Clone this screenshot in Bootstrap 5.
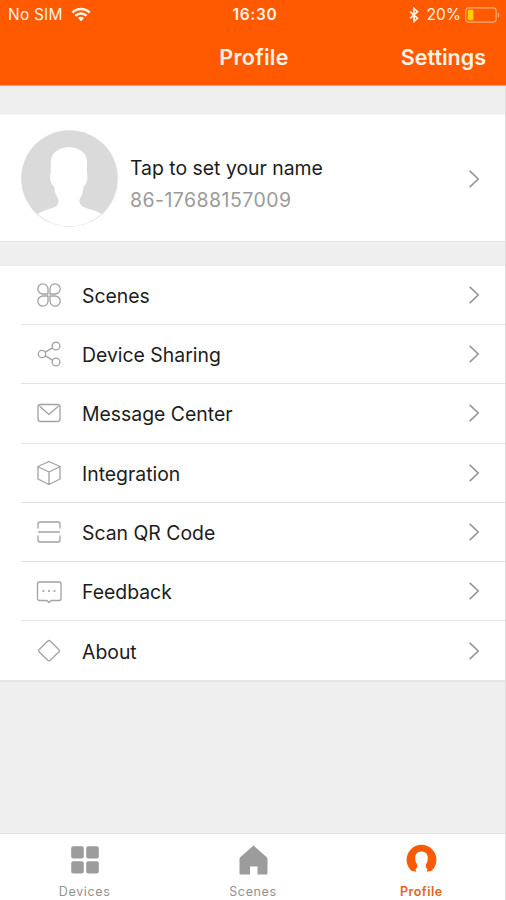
<!DOCTYPE html>
<html lang="en">
<head>
<meta charset="utf-8">
<meta name="viewport" content="width=device-width, initial-scale=1">
<title>Profile</title>
<link rel="stylesheet" href="https://cdn.jsdelivr.net/npm/bootstrap@5.3.0/dist/css/bootstrap.min.css">
<style>
  body { font-family: Inter, "Liberation Sans", sans-serif; background: #efefef; color: #1c1c1c; }
  .screen { height: 900px; border-right: 1px solid #dedede; }
  .top { height: 86px; background: #ff5a00; color: #fff3e6; margin-right: -1px; border-bottom: 1px solid #ff9a66; }
  .status { height: 29px; font-size: 15.5px; line-height: 30px; padding: 0 6px 0 8px; }
  .status > div, .titlebar > div { flex: 1 1 0; }
  .sim { letter-spacing: .2px; }
  .clock { font-weight: 600; letter-spacing: .7px; padding-left: 2px; }
  .titlebar { height: 56px; font-size: 21.5px; font-weight: 600; line-height: 57px; padding: 0 20px; }
  .titlebar .heading { letter-spacing: .3px; padding-left: 2px; }
  .who { height: 128px; margin-top: 28px; padding: 0 25px 0 21px; border-top: 1px solid #f4f4f4; border-bottom: 1px solid #e4e4e4; }
  .who .lines { padding-top: 12px; padding-left: 12px; }
  .who .name { font-size: 19.4px; line-height: 32px; }
  .who .phone { font-size: 19.5px; line-height: 32px; letter-spacing: .45px; color: #9b9b9b; }
  .who .chev { margin-top: 2px; }
  .menu { margin-top: 24px; padding-left: 21px; border-bottom: 2px solid #e6e6e6; }
  .menu a { height: 59.3px; padding: 0 25px 0 14px; color: #1c1c1c; font-size: 19.4px; border-top: 1px solid #e3e3e3; }
  .menu a:first-child { height: 58px; border-top: 0; }
  .menu .label { margin-left: 19px; padding-top: 3px; }
  .line { fill: none; stroke: #a2a2a2; stroke-width: 1.3; stroke-linejoin: round; stroke-linecap: round; }
  .chev { fill: none; stroke: #969696; stroke-width: 1.6; }
  .tabs { height: 67px; border-top: 1px solid #e2e2e2; }
  .tabs a { flex: 1 1 0; color: #929292; font-size: 12.5px; letter-spacing: .65px; line-height: 16px; padding-top: 10px; padding-left: 1px; }
  .tabs svg { margin-bottom: 8px; }
  .tabs a.on { color: #e8631c; font-weight: 600; letter-spacing: .5px; }
</style>
</head>
<body>
<svg class="d-none">
  <symbol id="chevron" viewBox="0 0 12 20"><path d="M1.700 1.800 10.200 10 1.700 18.200"/></symbol>
</svg>
<main class="screen d-flex flex-column">
  <header class="top flex-shrink-0">
    <div class="status d-flex">
      <div class="d-flex align-items-center"><span class="sim">No SIM</span>
        <svg class="ms-2" width="20" height="15" viewBox="0 0 20 15" fill="none" stroke="#fff3e6" stroke-width="2.500"><path d="M1.300 5.700a12.300 12.300 0 0 1 17.400 0M4.400 8.900a7.900 7.900 0 0 1 11.200 0"/><path d="M10 14.200 6.900 11.100a4.400 4.400 0 0 1 6.200 0Z" fill="#fff3e6" stroke="none"/></svg>
      </div>
      <div class="clock text-center">16:30</div>
      <div class="d-flex align-items-center justify-content-end">
        <svg width="10" height="16" viewBox="0 0 11 17" fill="none" stroke="#fff3e6" stroke-width="1.800"><path d="m1.200 4.700 8.200 7.400-3.900 3.600V1.300l3.900 3.600-8.200 7.400"/></svg>
        <span class="ms-2 me-1">20%</span>
        <svg width="35" height="16" viewBox="0 0 35 16"><rect x=".7" y=".8" width="30.400" height="14.400" rx="3" fill="none" stroke="#ffad7a" stroke-width="1.200"/><rect x="2.800" y="2.800" width="5.600" height="10.400" rx="1" fill="#ffcf00"/><path d="M32.800 5.200c2 1.200 2 4.400 0 5.600Z" fill="#ffad7a"/></svg>
      </div>
    </div>
    <div class="titlebar d-flex">
      <div></div><div class="heading text-center">Profile</div><div class="text-end">Settings</div>
    </div>
  </header>

  <section class="who bg-white d-flex align-items-center flex-shrink-0">
    <svg width="97" height="97" viewBox="0 0 97 97"><circle cx="48.500" cy="48.500" r="48.300" fill="#dadada"/><path d="M16.500 84C25 78.500 34 79 37 74C38 71 37 68.500 36 66.500C34 64 33.800 60 33.300 57C30.500 55 29 50 29 46.500C29 45 29.800 44 29.800 43V31C30 22 40 17 48 17S66 22 66 31V43C66 44 66.500 45 66.500 46.500C66.500 50 65 55 62.500 57C62 60 61.800 64 60 66.500C58.500 69 58 71 59 74C62 79 72 78.500 80.500 84A47.600 47.600 0 0 1 16.500 84Z" fill="#fff"/></svg>
    <div class="lines flex-grow-1">
      <div class="name">Tap to set your name</div>
      <div class="phone">86-17688157009</div>
    </div>
    <svg class="chev" width="12" height="20"><use href="#chevron"/></svg>
  </section>

  <nav class="menu bg-white flex-shrink-0">
    <a href="#" class="d-flex align-items-center text-decoration-none"><svg class="line" width="28" height="28" viewBox="0 0 28 28"><path d="M13 13H8a5.100 5.100 0 1 1 5-5ZM15 13h5a5.100 5.100 0 1 0-5-5ZM13 15H8a5.100 5.100 0 1 0 5 5ZM15 15h5a5.100 5.100 0 1 1-5 5Z"/></svg><span class="label flex-grow-1">Scenes</span><svg class="chev" width="12" height="20"><use href="#chevron"/></svg></a>
    <a href="#" class="d-flex align-items-center text-decoration-none"><svg class="line" width="28" height="28" viewBox="0 0 28 28"><circle cx="7" cy="14" r="3.700"/><circle cx="21" cy="6" r="3.900"/><circle cx="21" cy="22" r="3.900"/><path d="m10.300 12.100 7.300-4.200M10.300 15.900l7.300 4.200"/></svg><span class="label flex-grow-1">Device Sharing</span><svg class="chev" width="12" height="20"><use href="#chevron"/></svg></a>
    <a href="#" class="d-flex align-items-center text-decoration-none"><svg class="line" width="28" height="28" viewBox="0 0 28 28"><rect x="3" y="5.500" width="22" height="17" rx="2.500"/><path d="m5 7.500 9 8 9-8"/></svg><span class="label flex-grow-1">Message Center</span><svg class="chev" width="12" height="20"><use href="#chevron"/></svg></a>
    <a href="#" class="d-flex align-items-center text-decoration-none"><svg class="line" width="28" height="28" viewBox="0 0 28 28"><path d="M14 2.500 25 7.500V20L14 25.500 3 20V7.500ZM3.500 8 14 13 24.500 8M14 13V25"/></svg><span class="label flex-grow-1">Integration</span><svg class="chev" width="12" height="20"><use href="#chevron"/></svg></a>
    <a href="#" class="d-flex align-items-center text-decoration-none"><svg class="line" width="28" height="28" viewBox="0 0 28 28"><path d="M3 10V6Q3 4 5 4H23Q25 4 25 6V10M3 18V22Q3 24 5 24H23Q25 24 25 22V18M3.500 14H24.500"/></svg><span class="label flex-grow-1">Scan QR Code</span><svg class="chev" width="12" height="20"><use href="#chevron"/></svg></a>
    <a href="#" class="d-flex align-items-center text-decoration-none"><svg class="line" width="28" height="28" viewBox="0 0 28 28"><path d="M4.500 5H24Q26 5 26 7V21.500Q26 23.500 24 23.500H16L14 25.500 12 23.500H4.500Q2.500 23.500 2.500 21.500V7Q2.500 5 4.500 5Z"/><path d="M8.500 14h.01M14 14h.01M19.500 14h.01" stroke-width="2.200"/></svg><span class="label flex-grow-1">Feedback</span><svg class="chev" width="12" height="20"><use href="#chevron"/></svg></a>
    <a href="#" class="d-flex align-items-center text-decoration-none"><svg class="line" width="28" height="28" viewBox="0 0 28 28"><path d="M12.800 4Q14 3 15.200 4L24 12.700Q25 13.700 24 14.700L15.200 23.300Q14 24.300 12.800 23.300L4 14.700Q3 13.700 4 12.700Z"/></svg><span class="label flex-grow-1">About</span><svg class="chev" width="12" height="20"><use href="#chevron"/></svg></a>
  </nav>

  <nav class="tabs bg-white d-flex mt-auto flex-shrink-0">
    <a href="#" class="d-flex flex-column align-items-center text-decoration-none"><svg width="32" height="32" viewBox="0 0 32 32" fill="#9c9c9c"><rect x="2.200" y="2.200" width="12.600" height="12.400" rx="2"/><rect x="17.200" y="2.200" width="12.600" height="12.400" rx="2"/><rect x="2.200" y="17.200" width="12.600" height="12.400" rx="2"/><rect x="17.200" y="17.200" width="12.600" height="12.400" rx="2"/></svg><span>Devices</span></a>
    <a href="#" class="d-flex flex-column align-items-center text-decoration-none"><svg width="32" height="32" viewBox="0 0 32 32" fill="#9c9c9c"><path d="M16.500 1.500 29.500 13Q30.500 14 30.500 15V29.500Q30.500 30.500 29.500 30.500H20.500V22.500H13V30.500H3.500Q2.500 30.500 2.500 29.500V15Q2.500 14 3.500 13Z"/></svg><span>Scenes</span></a>
    <a href="#" class="on d-flex flex-column align-items-center text-decoration-none"><svg width="32" height="32" viewBox="0 0 32 32" fill="#f95a04"><path d="M6.500 26.800A14.900 14.900 0 1 1 26.500 26.800L21.500 27.800 22.500 25.500 20.800 23V20.500C22.700 18 22.800 16 22.800 13.500C22.800 5.500 10.200 5.500 10.200 13.500C10.200 16 10.300 18 12.200 20.500V23L10.500 25.500 11.500 27.800Z"/></svg><span>Profile</span></a>
  </nav>
</main>
<script src="https://cdn.jsdelivr.net/npm/bootstrap@5.3.0/dist/js/bootstrap.bundle.min.js"></script>
</body>
</html>
